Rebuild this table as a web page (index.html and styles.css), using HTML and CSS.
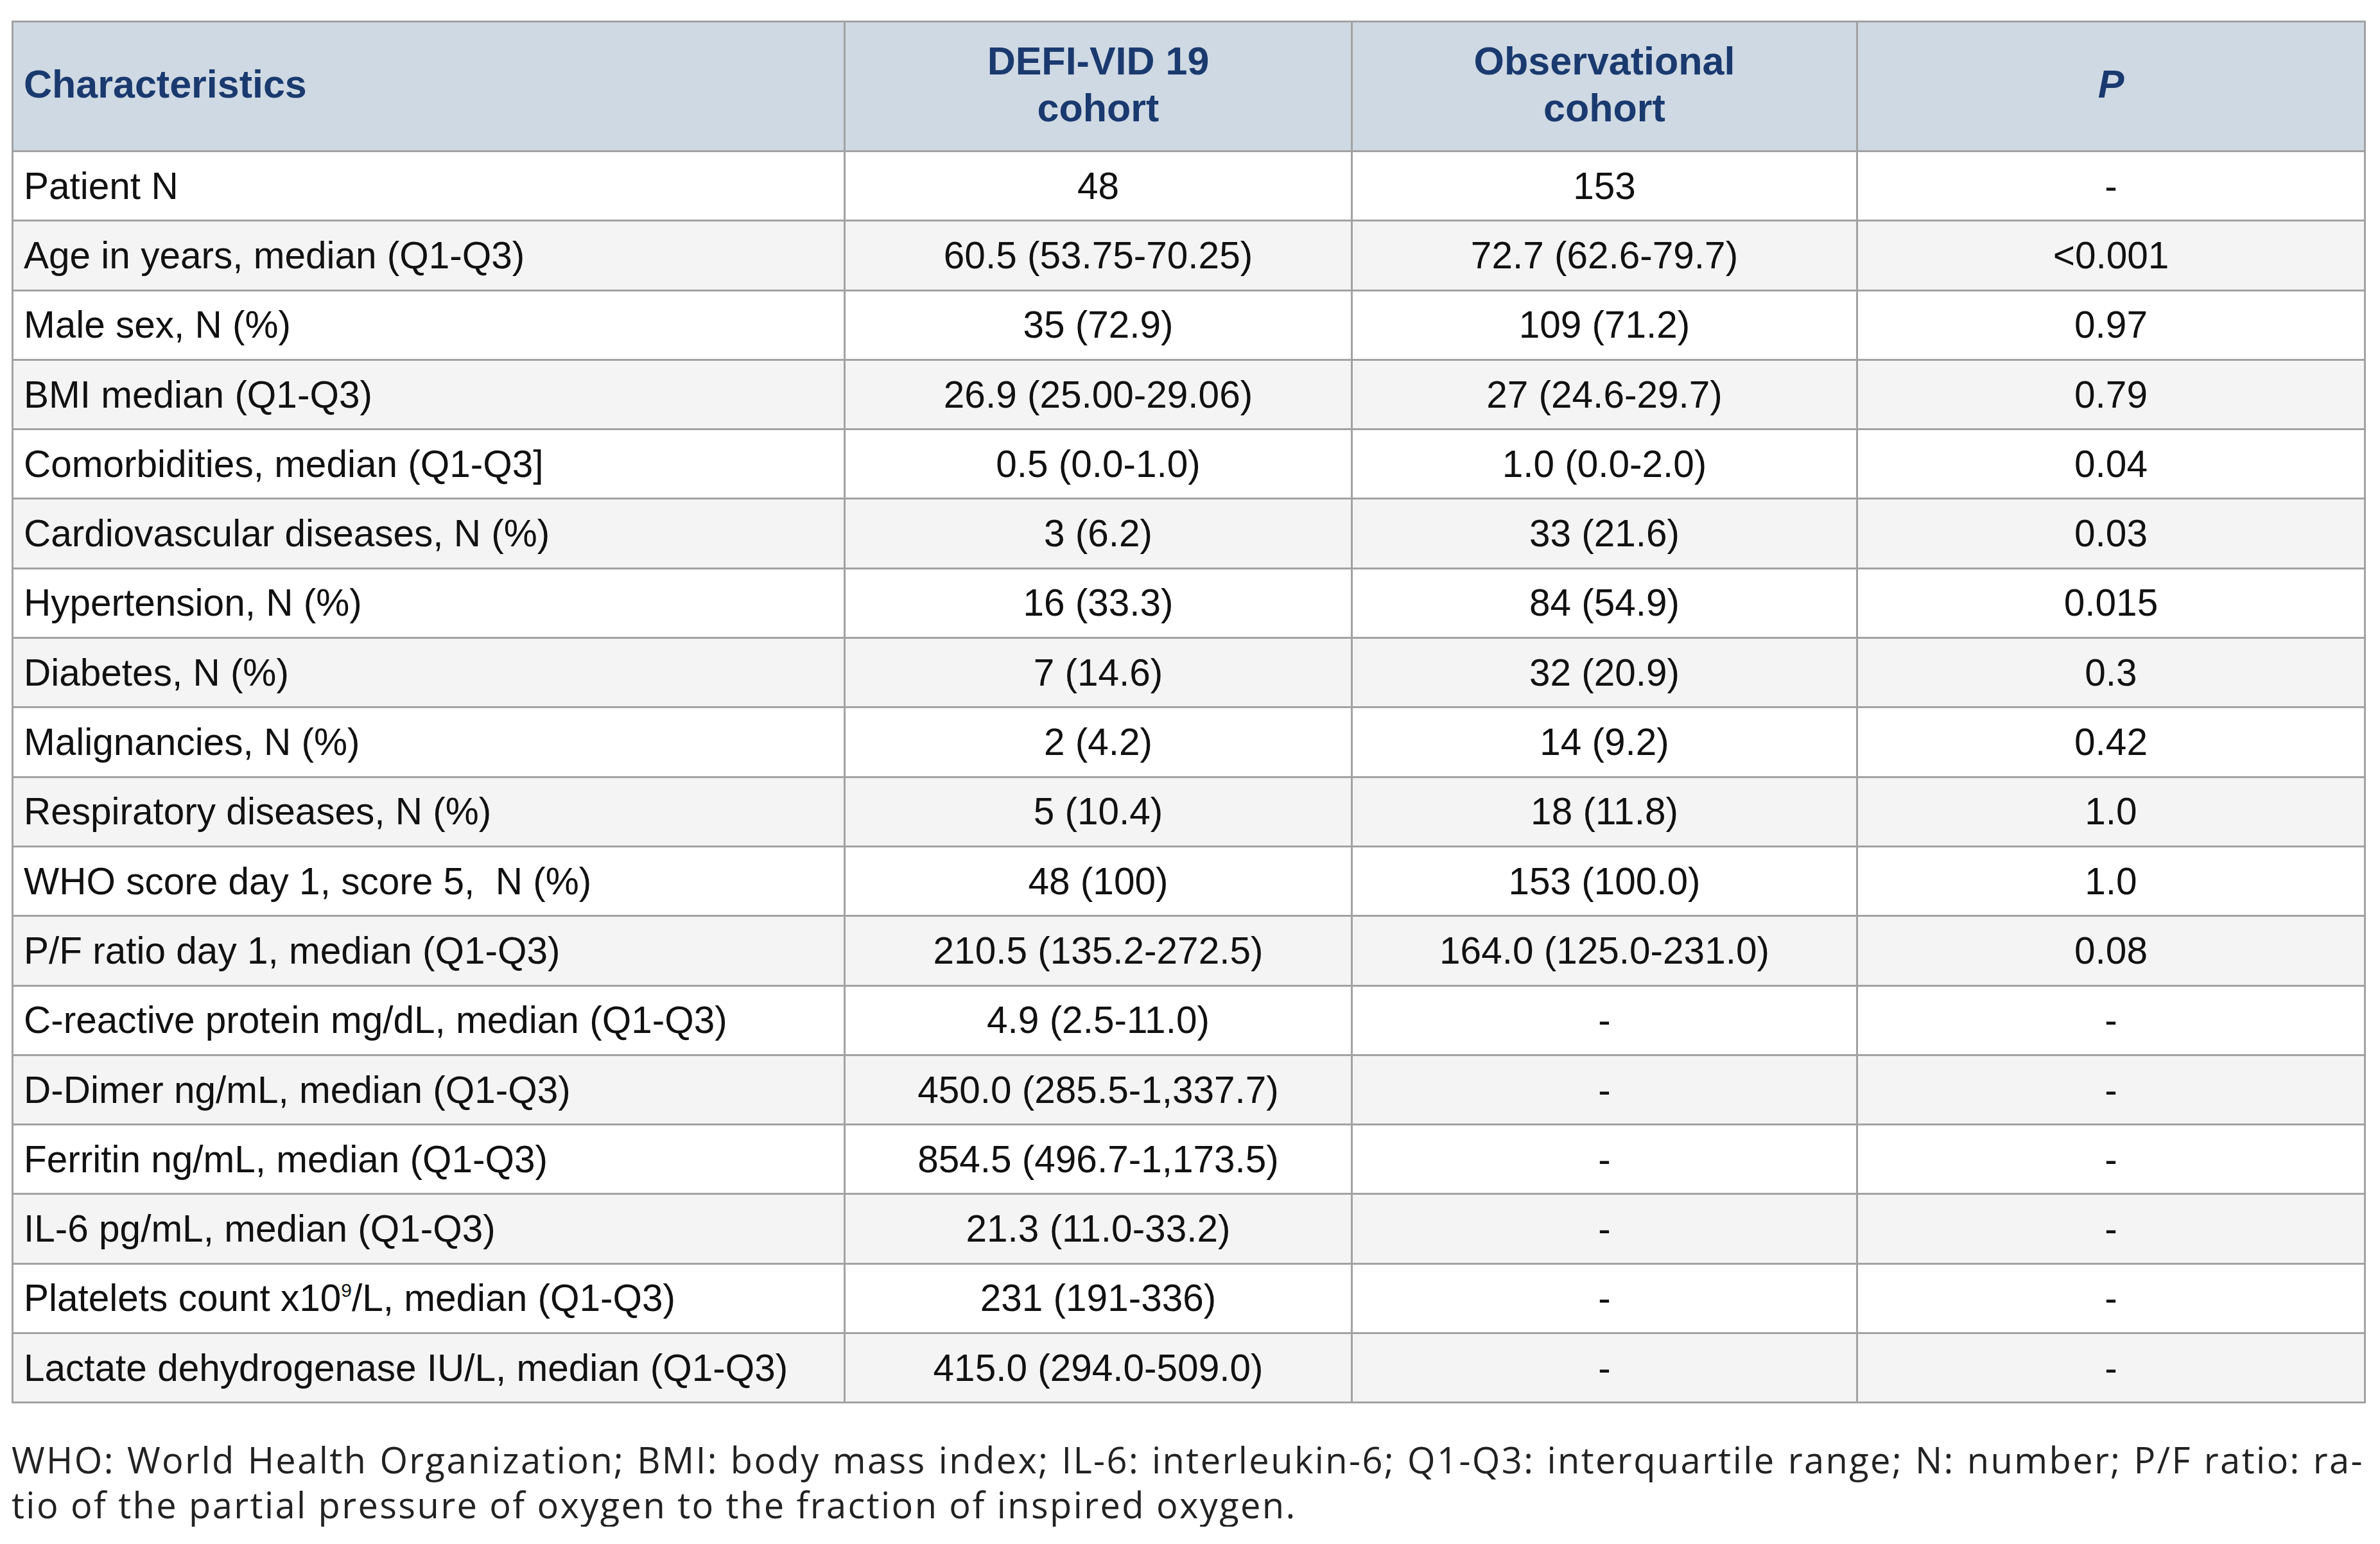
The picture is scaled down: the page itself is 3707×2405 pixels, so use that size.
FILE: index.html
```html
<!DOCTYPE html>
<html lang="en">
<head>
<meta charset="utf-8">
<title>Baseline characteristics</title>
<link rel="stylesheet" href="styles.css">
</head>
<body>
<div class="page">
  <table class="data">
    <colgroup>
      <col class="c1"><col class="c2"><col class="c3"><col class="c4">
    </colgroup>
    <thead>
      <tr>
        <th class="left">Characteristics</th>
        <th>DEFI-VID 19<br>cohort</th>
        <th>Observational<br>cohort</th>
        <th><i>P</i></th>
      </tr>
    </thead>
    <tbody>
      <tr><td>Patient N</td><td>48</td><td>153</td><td>-</td></tr>
      <tr><td>Age in years, median (Q1-Q3)</td><td>60.5 (53.75-70.25)</td><td>72.7 (62.6-79.7)</td><td>&lt;0.001</td></tr>
      <tr><td>Male sex, N (%)</td><td>35 (72.9)</td><td>109 (71.2)</td><td>0.97</td></tr>
      <tr><td>BMI median (Q1-Q3)</td><td>26.9 (25.00-29.06)</td><td>27 (24.6-29.7)</td><td>0.79</td></tr>
      <tr><td>Comorbidities, median (Q1-Q3]</td><td>0.5 (0.0-1.0)</td><td>1.0 (0.0-2.0)</td><td>0.04</td></tr>
      <tr><td>Cardiovascular diseases, N (%)</td><td>3 (6.2)</td><td>33 (21.6)</td><td>0.03</td></tr>
      <tr><td>Hypertension, N (%)</td><td>16 (33.3)</td><td>84 (54.9)</td><td>0.015</td></tr>
      <tr><td>Diabetes, N (%)</td><td>7 (14.6)</td><td>32 (20.9)</td><td>0.3</td></tr>
      <tr><td>Malignancies, N (%)</td><td>2 (4.2)</td><td>14 (9.2)</td><td>0.42</td></tr>
      <tr><td>Respiratory diseases, N (%)</td><td>5 (10.4)</td><td>18 (11.8)</td><td>1.0</td></tr>
      <tr><td>WHO score day 1, score 5,&nbsp; N (%)</td><td>48 (100)</td><td>153 (100.0)</td><td>1.0</td></tr>
      <tr><td>P/F ratio day 1, median (Q1-Q3)</td><td>210.5 (135.2-272.5)</td><td>164.0 (125.0-231.0)</td><td>0.08</td></tr>
      <tr><td>C-reactive protein mg/dL, median (Q1-Q3)</td><td>4.9 (2.5-11.0)</td><td>-</td><td>-</td></tr>
      <tr><td>D-Dimer ng/mL, median (Q1-Q3)</td><td>450.0 (285.5-1,337.7)</td><td>-</td><td>-</td></tr>
      <tr><td>Ferritin ng/mL, median (Q1-Q3)</td><td>854.5 (496.7-1,173.5)</td><td>-</td><td>-</td></tr>
      <tr><td>IL-6 pg/mL, median (Q1-Q3)</td><td>21.3 (11.0-33.2)</td><td>-</td><td>-</td></tr>
      <tr><td>Platelets count x10<sup>9</sup>/L, median (Q1-Q3)</td><td>231 (191-336)</td><td>-</td><td>-</td></tr>
      <tr><td>Lactate dehydrogenase IU/L, median (Q1-Q3)</td><td>415.0 (294.0-509.0)</td><td>-</td><td>-</td></tr>
    </tbody>
  </table>
  <div class="note">
    <p class="line full">WHO: World Health Organization; BMI: body mass index; IL-6: interleukin-6; Q1-Q3: interquartile range; N: number; P/F ratio: ra-</p>
    <p class="line">tio of the partial pressure of oxygen to the fraction of inspired oxygen.</p>
  </div>
</div>
</body>
</html>
```

FILE: styles.css
```css
html, body {
  margin: 0;
  padding: 0;
  background: #ffffff;
}

.page {
  padding: 32px 0 0 18px;
  width: 3664px;
}

.data {
  width: 3664px;
  border-collapse: collapse;
  table-layout: fixed;
  border: 3px solid #a2a2a2;
  font-family: "Liberation Sans", Arial, sans-serif;
  font-size: 58.5px;
  color: #111111;
}

.c1 { width: 1296px; }
.c2 { width: 790px; }
.c3 { width: 787px; }
.c4 { width: 791px; }

.data th,
.data td {
  border: 3px solid #a2a2a2;
  padding: 0 16px;
  text-align: center;
  vertical-align: middle;
  white-space: nowrap;
}

.data thead th {
  background: #cfd9e3;
  color: #1a3a6f;
  font-weight: bold;
  font-size: 61px;
  line-height: 73px;
  height: 202px;
  padding-bottom: 6px;
  box-sizing: border-box;
}

.data thead th.left {
  text-align: left;
}

.data td {
  height: 105.3px;
  line-height: 66px;
}

.data td:first-child {
  text-align: left;
}

.data tbody tr:nth-child(even) td {
  background: #f4f4f4;
}

.data sup {
  font-size: 30px;
  line-height: 0;
  vertical-align: 22px;
}

.note {
  margin-top: 52px;
  font-family: "Open Sans", "Liberation Sans", sans-serif;
  font-size: 56px;
  letter-spacing: 2.4px;
  color: #222222;
}

.note .line {
  margin: 0;
  line-height: 70px;
  white-space: nowrap;
}

.note .full {
  text-align: justify;
  text-align-last: justify;
}
```
